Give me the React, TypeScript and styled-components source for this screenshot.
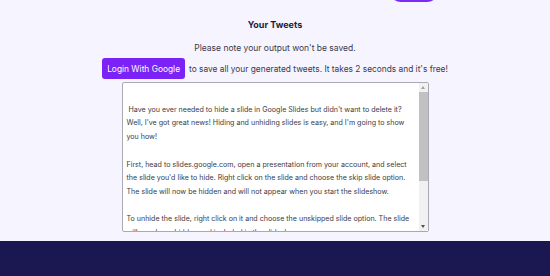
import React from 'react'
import styled, { createGlobalStyle } from 'styled-components'

const GlobalStyle = createGlobalStyle`
  body {
    margin: 0;
    background: #f6f4fe;
    font-family: Inter, 'Liberation Sans', sans-serif;
    overflow: hidden;
  }
`

const Page = styled.div`
  display: flex;
  flex-direction: column;
  min-height: 276px;
`

const Nav = styled.div`
  display: flex;
  justify-content: flex-end;
  padding-right: 111px;
  height: 2px;
  overflow: visible;
`

const NavButton = styled.button`
  margin-top: -34px;
  width: 50px;
  height: 36px;
  border: none;
  border-radius: 12px;
  background: #7a2af5;
`

const Main = styled.main`
  display: flex;
  flex-direction: column;
  align-items: center;
  padding-top: 15px;
`

const Title = styled.h2`
  margin: 0;
  font-size: 9px;
  font-weight: 700;
  color: #1c1a3c;
  line-height: 16px;
`

const Note = styled.p`
  margin: 8px 0 0;
  font-size: 8.5px;
  color: #3b3a4c;
  line-height: 14px;
`

const LoginRow = styled.div`
  display: flex;
  align-items: center;
  gap: 4px;
  margin-top: 3px;
  font-size: 8.35px;
  color: #3b3a4c;
`

const LoginButton = styled.button`
  height: 21px;
  padding: 0 5px;
  border: none;
  border-radius: 3px;
  background: #7b22f6;
  color: #fff;
  font-family: inherit;
  font-size: 8.4px;
`

const OutputBox = styled.div`
  position: relative;
  margin-top: 3px;
  width: 307px;
  height: 150px;
`

const Output = styled.textarea`
  box-sizing: border-box;
  display: block;
  width: 100%;
  height: 100%;
  padding: 6px 14px 0 4px;
  border: 1px solid #a9a9b4;
  border-radius: 2px;
  background: #fff;
  color: #3a3a44;
  font-family: inherit;
  font-size: 7.1px;
  line-height: 13.7px;
  resize: none;
  overflow: hidden;
`

const Scrollbar = styled.div`
  position: absolute;
  top: 1px;
  right: 1px;
  bottom: 1px;
  width: 9px;
  display: flex;
  flex-direction: column;
  background: #f1f1f1;
`

const Arrow = styled.div<{ $down?: boolean }>`
  height: 9px;
  display: flex;
  align-items: center;
  justify-content: center;

  &::after {
    content: '';
    border-left: 2.5px solid transparent;
    border-right: 2.5px solid transparent;
    ${({ $down }) =>
      $down ? 'border-top: 3px solid #505050;' : 'border-bottom: 3px solid #a3a3a3;'}
  }
`

const Track = styled.div`
  flex: 1;
`

const Thumb = styled.div`
  height: 89px;
  background: #c1c1c1;
`

const Footer = styled.footer`
  margin-top: auto;
  height: 35px;
  background: #1b1750;
`

const tweet = `
 Have you ever needed to hide a slide in Google Slides but didn't want to delete it? Well, I've got great news! Hiding and unhiding slides is easy, and I'm going to show you how!

First, head to slides.google.com, open a presentation from your account, and select the slide you'd like to hide. Right click on the slide and choose the skip slide option. The slide will now be hidden and will not appear when you start the slideshow.

To unhide the slide, right click on it and choose the unskipped slide option. The slide will now be unhidden and included in the slideshow.`

export default function App() {
  return (
    <Page>
      <GlobalStyle />
      <Nav>
        <NavButton aria-label="menu" />
      </Nav>
      <Main>
        <Title>Your Tweets</Title>
        <Note>Please note your output won't be saved.</Note>
        <LoginRow>
          <LoginButton>Login With Google</LoginButton>
          <span>to save all your generated tweets. It takes 2 seconds and it's free!</span>
        </LoginRow>
        <OutputBox>
          <Output readOnly value={tweet} />
          <Scrollbar>
            <Arrow />
            <Track>
              <Thumb />
            </Track>
            <Arrow $down />
          </Scrollbar>
        </OutputBox>
      </Main>
      <Footer />
    </Page>
  )
}
